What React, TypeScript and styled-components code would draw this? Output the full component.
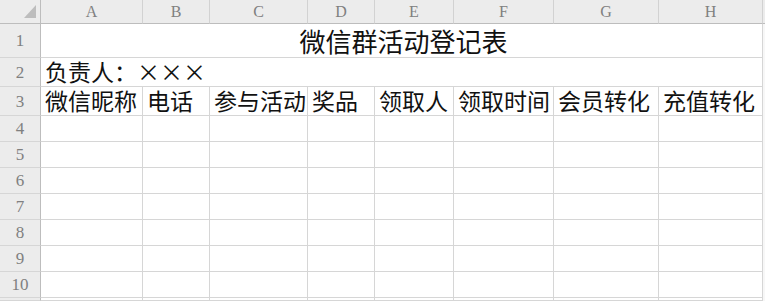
import React from "react";
import styled, { createGlobalStyle } from "styled-components";

const Global = createGlobalStyle`
  html, body { margin: 0; padding: 0; background: #ffffff; }
  body { width: 765px; height: 301px; overflow: hidden; }
`;

const COLS = [102, 67, 98, 67, 79, 100, 105, 104];
const ROW_HEIGHTS = [34, 29, 29, 26, 26, 26, 26, 26, 26, 26];
const LETTERS = ["A", "B", "C", "D", "E", "F", "G", "H"];
const HEADERS = ["微信昵称", "电话", "参与活动", "奖品", "领取人", "领取时间", "会员转化", "充值转化"];

const Sheet = styled.div`
  display: grid;
  grid-template-columns: 41px ${COLS.map((c) => `${c}px`).join(" ")} 1fr;
  grid-template-rows: 24px ${ROW_HEIGHTS.map((h) => `${h}px`).join(" ")} 1fr;
  width: 765px;
  height: 301px;
  overflow: hidden;
  background: #ffffff;
`;

const Corner = styled.div`
  box-sizing: border-box;
  background: #ececec;
  border-right: 1px solid #bdbdbd;
  border-bottom: 1px solid #bdbdbd;
  display: flex;
  justify-content: flex-end;
  align-items: flex-end;
  padding: 0 4px 5px 0;
`;

const ColHead = styled.div`
  box-sizing: border-box;
  background: #ececec;
  border-right: 1px solid #d2d2d2;
  border-bottom: 1px solid #bdbdbd;
  color: #808080;
  font-family: "Liberation Serif", serif;
  font-size: 16px;
  display: flex;
  align-items: center;
  justify-content: center;
  padding-top: 1px;
`;

const Filler = styled.div<{ $head?: boolean }>`
  box-sizing: border-box;
  background: ${(p) => (p.$head ? "#ececec" : "#f7f7f7")};
  border-bottom: ${(p) => (p.$head ? "1px solid #bdbdbd" : "none")};
`;

const RowHead = styled.div`
  box-sizing: border-box;
  background: #ececec;
  border-right: 1px solid #bdbdbd;
  border-bottom: 1px solid #d6d6d6;
  color: #808080;
  font-family: "Liberation Serif", serif;
  font-size: 17px;
  display: flex;
  align-items: center;
  justify-content: center;
  padding-top: 1px;
`;

const Cell = styled.div<{ $span?: number; $center?: boolean; $size?: number }>`
  box-sizing: border-box;
  grid-column: span ${(p) => p.$span ?? 1};
  border-right: 1px solid #d6d6d6;
  border-bottom: 1px solid #d6d6d6;
  font-family: "Noto Sans CJK SC", "Noto Sans", sans-serif;
  font-size: ${(p) => p.$size ?? 23}px;
  color: #111111;
  display: flex;
  align-items: flex-end;
  justify-content: ${(p) => (p.$center ? "center" : "flex-start")};
  padding: 0 0 0 4px;
  white-space: nowrap;
  line-height: 1;
`;

const CellText = styled.span<{ $drop?: number }>`
  display: block;
  padding-bottom: ${(p) => p.$drop ?? 3}px;
`;

export default function App() {
  const bodyRows: React.ReactNode[] = [];
  ROW_HEIGHTS.forEach((_, i) => {
    const r = i + 1;
    bodyRows.push(<RowHead key={`rh${r}`}>{r}</RowHead>);
    if (r === 1) {
      bodyRows.push(
        <Cell key="title" $span={8} $center $size={26}>
          <CellText $drop={3}>微信群活动登记表</CellText>
        </Cell>
      );
    } else if (r === 2) {
      bodyRows.push(
        <Cell key="owner" $span={8}>
          <CellText>负责人：×××</CellText>
        </Cell>
      );
    } else if (r === 3) {
      HEADERS.forEach((h) =>
        bodyRows.push(
          <Cell key={`h-${h}`}>
            <CellText>{h}</CellText>
          </Cell>
        )
      );
    } else {
      COLS.forEach((_, c) => bodyRows.push(<Cell key={`c${r}-${c}`} />));
    }
    bodyRows.push(<Filler key={`f${r}`} />);
  });

  return (
    <>
      <Global />
      <Sheet>
        <Corner>
          <svg width="12" height="13" viewBox="0 0 12 13">
            <polygon points="12,0 12,13 0,13" fill="#bdbdbd" />
          </svg>
        </Corner>
        {LETTERS.map((l) => (
          <ColHead key={l}>{l}</ColHead>
        ))}
        <Filler $head />
        {bodyRows}
        <RowHead />
        {COLS.map((_, c) => (
          <Cell key={`tail-${c}`} />
        ))}
        <Filler />
      </Sheet>
    </>
  );
}
